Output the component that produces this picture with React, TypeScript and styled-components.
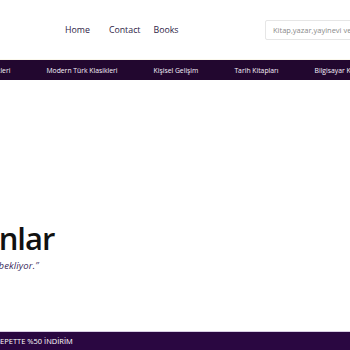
import styled, { createGlobalStyle } from 'styled-components';

const GlobalStyle = createGlobalStyle`
  html, body {
    margin: 0;
    padding: 0;
    background: #ffffff;
    overflow: hidden;
  }
  body {
    font-family: 'Open Sans', 'Noto Sans', sans-serif;
  }
  * {
    box-sizing: border-box;
  }
`;

const Page = styled.div`
  width: 350px;
  height: 350px;
  display: flex;
  flex-direction: column;
  overflow: hidden;
`;

const Header = styled.header`
  height: 60px;
  flex-shrink: 0;
  display: flex;
  align-items: center;
  padding-left: 65px;
  border-bottom: 1px solid #fbf8ec;
`;

const Nav = styled.nav`
  width: 200px;
  flex-shrink: 0;
  display: flex;
  align-items: center;
`;

const NavLink = styled.a<{ $space: number }>`
  font-size: 8.8px;
  color: #2e2346;
  text-decoration: none;
  margin-left: ${(p) => p.$space}px;
  cursor: pointer;
`;

const SearchInput = styled.input`
  flex-shrink: 0;
  width: 220px;
  height: 20px;
  border: 1px solid #e6e6e6;
  border-radius: 2px;
  padding: 0 7px;
  font-family: inherit;
  font-size: 7.5px;
  color: #333;
  outline: none;

  &::placeholder {
    color: #8a8a8a;
  }
`;

const CategoryBar = styled.div`
  height: 20px;
  flex-shrink: 0;
  background: #22072f;
  display: flex;
  align-items: center;
  overflow: hidden;
`;

const CategoryTrack = styled.div`
  display: flex;
  align-items: center;
  gap: 36px;
  margin-left: -40px;
  white-space: nowrap;
`;

const Category = styled.span`
  color: #f7f2fb;
  font-size: 6.8px;
`;

const Hero = styled.section`
  flex: 1;
  padding-top: 139px;
  overflow: hidden;
`;

const HeroInner = styled.div`
  margin-left: -123px;
  white-space: nowrap;
`;

const Title = styled.h1`
  margin: 0;
  font-size: 31px;
  font-weight: 600;
  line-height: 38px;
  letter-spacing: -1px;
  color: #111111;
`;

const Subtitle = styled.p`
  margin: 2px 0 0;
  font-size: 9.5px;
  line-height: 13px;
  letter-spacing: 0.13px;
  font-style: italic;
  color: #3a2a5c;
`;

const PromoBar = styled.div`
  height: 19px;
  flex-shrink: 0;
  background: #2a0741;
  border-top: 1px solid #d9cde4;
  display: flex;
  align-items: center;
  overflow: hidden;
`;

const PromoText = styled.span`
  margin-left: -4px;
  color: #ffffff;
  font-size: 7.5px;
  white-space: nowrap;
`;

const categories = [
  'Dünya Klasikleri',
  'Modern Türk Klasikleri',
  'Kişisel Gelişim',
  'Tarih Kitapları',
  'Bilgisayar Kitapları',
];

const App = () => {
  return (
    <Page>
      <GlobalStyle />
      <Header>
        <Nav>
          <NavLink $space={0}>Home</NavLink>
          <NavLink $space={19}>Contact</NavLink>
          <NavLink $space={13}>Books</NavLink>
        </Nav>
        <SearchInput type="text" placeholder="Kitap,yazar,yayinevi veya ISBN ara" />
      </Header>
      <CategoryBar>
        <CategoryTrack>
          {categories.map((c) => (
            <Category key={c}>{c}</Category>
          ))}
        </CategoryTrack>
      </CategoryBar>
      <Hero>
        <HeroInner>
          <Title>Çok Satanlar</Title>
          <Subtitle>“En çok okunan kitaplar sizi bekliyor.”</Subtitle>
        </HeroInner>
      </Hero>
      <PromoBar>
        <PromoText>SEPETTE %50 İNDİRİM</PromoText>
      </PromoBar>
    </Page>
  );
};

export default App;
